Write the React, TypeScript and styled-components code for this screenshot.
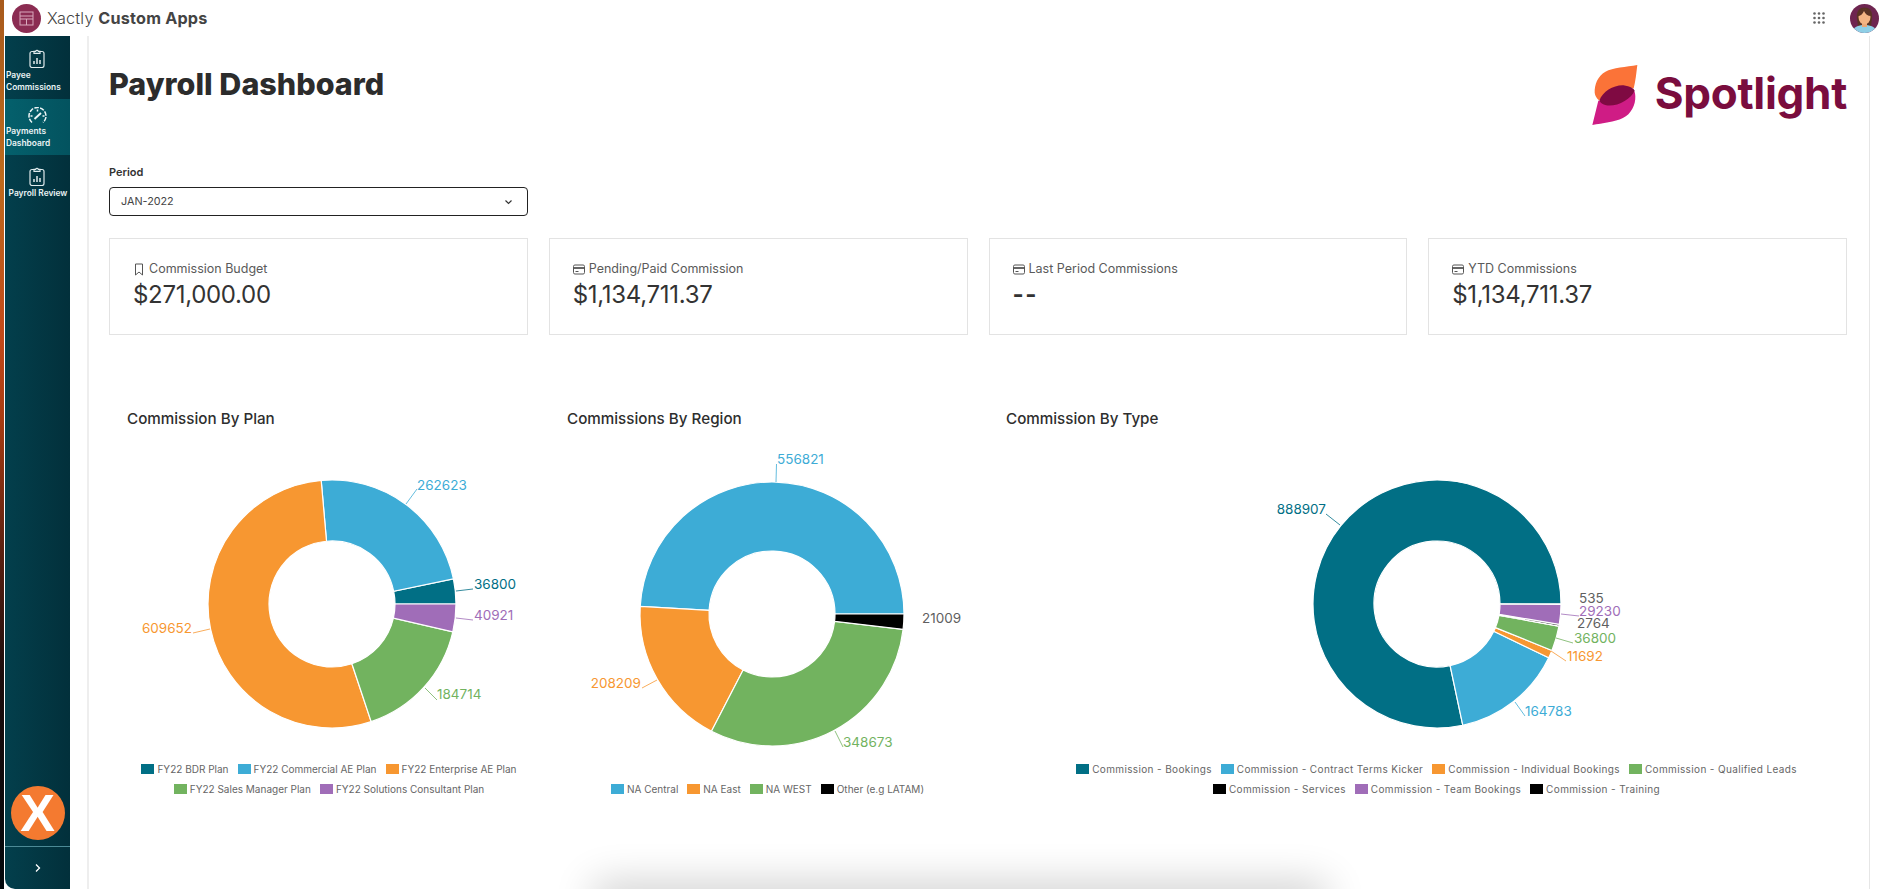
import * as React from 'react';
import styled, { createGlobalStyle } from 'styled-components';

type Slice = {
  value: number;
  color: string;
  label?: [number, number];
  end?: boolean;
  line?: [number, number, number, number];
};

type ChartData = {
  title: string;
  left: number;
  width: number;
  cx: number;
  cy: number;
  r: number;
  slices: Slice[];
  legend: { name: string; color: string }[];
  legendWidth: number;
  legendShift: number;
  legendSpacing: number;
};

const TEAL = '#016f85';
const BLUE = '#3dacd6';
const ORANGE = '#f79731';
const GREEN = '#72b35f';
const PURPLE = '#a06db8';
const BLACK = '#000000';

const charts: ChartData[] = [
  {
    title: 'Commission By Plan',
    left: 109,
    width: 440,
    cx: 332,
    cy: 604,
    r: 124,
    legendWidth: 400,
    legendShift: 0,
    legendSpacing: 0,
    slices: [
      { value: 36800, color: TEAL, label: [474, 589], line: [456, 591, 473, 589] },
      { value: 262623, color: BLUE, label: [417, 490], line: [406, 504, 417, 489] },
      { value: 609652, color: ORANGE, label: [192, 633], end: true, line: [210, 629, 193, 633] },
      { value: 184714, color: GREEN, label: [437, 699], line: [425, 688, 437, 700] },
      { value: 40921, color: PURPLE, label: [474, 620], line: [456, 618, 473, 620] },
    ],
    legend: [
      { name: 'FY22 BDR Plan', color: TEAL },
      { name: 'FY22 Commercial AE Plan', color: BLUE },
      { name: 'FY22 Enterprise AE Plan', color: ORANGE },
      { name: 'FY22 Sales Manager Plan', color: GREEN },
      { name: 'FY22 Solutions Consultant Plan', color: PURPLE },
    ],
  },
  {
    title: 'Commissions By Region',
    left: 549,
    width: 439,
    cx: 772,
    cy: 614,
    r: 132,
    legendWidth: 400,
    legendShift: -1,
    legendSpacing: 0,
    slices: [
      { value: 556821, color: BLUE, label: [777, 464], line: [776, 482, 776.5, 464] },
      { value: 208209, color: ORANGE, label: [641, 688], end: true, line: [657, 680, 642, 688] },
      { value: 348673, color: GREEN, label: [843, 747], line: [835, 731, 843, 747] },
      { value: 21009, color: BLACK, label: [922, 623] },
    ],
    legend: [
      { name: 'NA Central', color: BLUE },
      { name: 'NA East', color: ORANGE },
      { name: 'NA WEST', color: GREEN },
      { name: 'Other (e.g LATAM)', color: BLACK },
    ],
  },
  {
    title: 'Commission By Type',
    left: 988,
    width: 859,
    cx: 1437,
    cy: 604,
    r: 124,
    legendWidth: 800,
    legendShift: 19,
    legendSpacing: 0.36,
    slices: [
      { value: 888907, color: TEAL, label: [1326, 514], end: true, line: [1340, 525, 1326, 514] },
      { value: 164783, color: BLUE, label: [1525, 716], line: [1515, 702, 1525, 716] },
      { value: 11692, color: ORANGE, label: [1567, 661], line: [1551, 651, 1566, 661] },
      { value: 36800, color: GREEN, label: [1574, 643], line: [1556, 638, 1573, 643] },
      { value: 2764, color: BLACK, label: [1577, 628] },
      { value: 29230, color: PURPLE, label: [1579, 616], line: [1561, 614, 1579, 616] },
      { value: 535, color: BLACK, label: [1579, 603] },
    ],
    legend: [
      { name: 'Commission - Bookings', color: TEAL },
      { name: 'Commission - Contract Terms Kicker', color: BLUE },
      { name: 'Commission - Individual Bookings', color: ORANGE },
      { name: 'Commission - Qualified Leads', color: GREEN },
      { name: 'Commission - Services', color: BLACK },
      { name: 'Commission - Team Bookings', color: PURPLE },
      { name: 'Commission - Training', color: BLACK },
    ],
  },
];

const cards = [
  { title: 'Commission Budget', value: '$271,000.00', icon: 'bookmark' },
  { title: 'Pending/Paid Commission', value: '$1,134,711.37', icon: 'card' },
  { title: 'Last Period Commissions', value: '--', icon: 'card' },
  { title: 'YTD Commissions', value: '$1,134,711.37', icon: 'card' },
];

const arcPath = (cx: number, cy: number, r: number, r0: number, a0: number, a1: number) => {
  const pt = (rad: number, a: number) => `${cx + rad * Math.cos(a)} ${cy - rad * Math.sin(a)}`;
  const large = a1 - a0 > Math.PI ? 1 : 0;
  return `M${pt(r, a0)} A${r} ${r} 0 ${large} 0 ${pt(r, a1)} L${pt(r0, a1)} A${r0} ${r0} 0 ${large} 1 ${pt(r0, a0)} Z`;
};

//===============================
// @Styled
//===============================
const GlobalStyle = createGlobalStyle`
  html, body {
    margin: 0;
    padding: 0;
    background: #fff;
  }
  * {
    box-sizing: border-box;
  }
`;

const Shell = styled.div`
  position: relative;
  display: flex;
  width: 1883px;
  height: 889px;
  overflow: hidden;
  background: #fff;
  font-family: Inter, 'Open Sans', sans-serif;
  color: #333;
`;

const EdgeStrip = styled.div`
  flex: 0 0 5px;
  border-right: 1px solid #fff;
  background: linear-gradient(
    180deg,
    #a85a1c 0%,
    #bd6a1c 20%,
    #c2491a 38%,
    #a83c12 47%,
    #5c2010 62%,
    #1c0c0c 76%,
    #03080c 100%
  );
`;

const Column = styled.div`
  flex: 1;
  display: flex;
  flex-direction: column;
  min-width: 0;
`;

const TopBar = styled.header`
  flex: 0 0 36px;
  display: flex;
  align-items: center;
  padding: 0 4px 0 7px;
`;

const AppMark = styled.div`
  display: flex;
  align-items: center;
  justify-content: center;
  width: 29px;
  height: 29px;
  border-radius: 50%;
  background: #8b2c52;
`;

const AppName = styled.div`
  margin-left: 6px;
  font-size: 16.2px;
  font-weight: 300;
  letter-spacing: 0.2px;
  color: #444;
  b {
    font-weight: 700;
  }
`;

const TopRight = styled.div`
  margin-left: auto;
  display: flex;
  align-items: center;
  gap: 25px;
`;

const Body = styled.div`
  flex: 1;
  display: flex;
  min-height: 0;
`;

const Sidebar = styled.nav`
  flex: 0 0 65px;
  display: flex;
  flex-direction: column;
  border-bottom-left-radius: 10px;
  background: linear-gradient(90deg, #033f4c 0%, #02303b 100%);
`;

const NavItem = styled.div<{ $active?: boolean; $height: number; $pad: number; $center?: boolean }>`
  height: ${(p) => p.$height}px;
  display: flex;
  flex-direction: column;
  align-items: ${(p) => (p.$center ? 'center' : 'flex-start')};
  padding-top: ${(p) => p.$pad}px;
  background: ${(p) => (p.$active ? 'linear-gradient(90deg, #04606c 0%, #03535f 100%)' : 'transparent')};
  svg {
    align-self: center;
    margin-right: 1px;
    flex: none;
  }
`;

const NavLabel = styled.span`
  margin-top: 1px;
  padding-left: 1px;
  font-size: 8.4px;
  font-weight: 600;
  line-height: 12px;
  color: #eaf3f5;
  white-space: nowrap;
`;

const SideBottom = styled.div`
  margin-top: auto;
  display: flex;
  flex-direction: column;
  align-items: center;
`;

const XBadge = styled.div`
  width: 54px;
  height: 54px;
  margin-bottom: 6px;
  border-radius: 50%;
  background: #f47a30;
  display: flex;
  align-items: center;
  justify-content: center;
  font-family: 'Liberation Sans', Arial, sans-serif;
  font-size: 52px;
  font-weight: 700;
  color: #fff;
`;

const Expand = styled.div`
  width: 100%;
  height: 43px;
  border-top: 1px solid #4c8a96;
  display: flex;
  align-items: center;
  justify-content: center;
`;

const Main = styled.main`
  flex: 1;
  margin: 0 13px 0 17px;
  border-left: 2px solid #eeeeee;
  border-right: 1px solid #e6e6e6;
  padding: 26px 22px 0 20px;
  min-width: 0;
`;

const Header = styled.div`
  height: 103px;
  display: flex;
  justify-content: space-between;
  align-items: flex-start;
`;

const PageTitle = styled.h1`
  margin: 2px 0 0;
  font-size: 30.5px;
  line-height: 40px;
  font-weight: 800;
  color: #2c2c2c;
`;

const Brand = styled.div`
  display: flex;
  align-items: flex-start;
  gap: 17px;
`;

const BrandMark = styled.svg`
  margin-top: 2px;
`;

const BrandName = styled.span`
  font-size: 44px;
  line-height: 50px;
  margin-top: 6px;
  font-weight: 700;
  letter-spacing: -0.3px;
  color: #7a0d3e;
`;

const FieldLabel = styled.div`
  font-size: 11px;
  line-height: 14px;
  font-weight: 600;
  color: #333;
`;

const Select = styled.div`
  width: 419px;
  height: 29px;
  margin-top: 8px;
  padding: 0 14px 0 11px;
  border: 1px solid #222;
  border-radius: 4px;
  display: flex;
  align-items: center;
  justify-content: space-between;
  font-size: 10.8px;
  color: #444;
`;

const CardRow = styled.section`
  display: grid;
  grid-template-columns: repeat(4, 1fr);
  gap: 21px;
  margin-top: 22px;
`;

const Card = styled.div`
  height: 97px;
  padding: 22px 23px 0;
  border: 1px solid #e3e3e3;
`;

const CardLabel = styled.div`
  display: flex;
  align-items: center;
  gap: 4px;
  font-size: 12.5px;
  line-height: 16px;
  color: #5a5a5a;
`;

const CardValue = styled.div<{ $dash?: boolean }>`
  margin-top: 2px;
  font-size: 24px;
  line-height: 32px;
  font-weight: ${(p) => (p.$dash ? 700 : 400)};
  letter-spacing: ${(p) => (p.$dash ? '1.5px' : '-0.3px')};
  color: #333;
`;

const ChartGrid = styled.section`
  display: grid;
  grid-template-columns: 440px 439px 1fr;
  margin-top: 73px;
`;

const ChartPanel = styled.div`
  display: flex;
  flex-direction: column;
`;

const ChartTitle = styled.h3`
  margin: 0;
  padding-left: 18px;
  font-size: 15.2px;
  line-height: 22px;
  font-weight: 500;
  color: #2e2e2e;
`;

const ChartSvg = styled.svg`
  display: block;
  width: 100%;
  height: 329px;
`;

const Legend = styled.div<{ $width: number; $shift: number; $spacing: number }>`
  height: 40px;
  max-width: ${(p) => p.$width}px;
  margin: 0 auto;
  transform: translateX(${(p) => p.$shift}px);
  display: flex;
  flex-wrap: wrap;
  justify-content: center;
  align-content: flex-end;
  gap: 0 9px;
  letter-spacing: ${(p) => p.$spacing}px;
`;

const LegendItem = styled.div`
  display: flex;
  align-items: center;
  gap: 3px;
  height: 20px;
  font-size: 10px;
  color: #666;
  white-space: nowrap;
`;

const Swatch = styled.i<{ $color: string }>`
  width: 13px;
  height: 10px;
  background: ${(p) => p.$color};
`;

const ValueLabel = styled.text<{ $color: string }>`
  font-family: Inter, sans-serif;
  font-size: 13.5px;
  fill: ${(p) => p.$color};
`;

const BottomShadow = styled.div`
  position: absolute;
  left: 600px;
  bottom: -24px;
  width: 720px;
  height: 24px;
  box-shadow: 0 0 40px 6px rgba(0, 0, 0, 0.2);
`;

//===============================
// @Icons
//===============================
const ClipboardIcon = () => (
  <svg width="16" height="19" viewBox="0 0 16 19" fill="none" stroke="#dfeaec" strokeWidth="1.2">
    <rect x="1" y="2.5" width="14" height="16" rx="2" />
    <path d="M5 4.400V2.400h1.600a1.500 1.500 0 0 1 2.800 0H11v2z" fill="#03414e" />
    <path d="M5 15v-3M8 15V9M11 15v-4" strokeWidth="1.5" />
  </svg>
);

const GaugeIcon = () => (
  <svg width="19" height="17" viewBox="0 0 19 17" fill="none" stroke="#eef6f7" strokeWidth="1.5">
    <path d="M4 15.500A8.500 8.500 0 1 1 15 15.500" strokeDasharray="4.500 1.300" />
    <path d="M6.500 12 13 6" strokeWidth="1.900" />
    <path d="M2.500 9h2M16.500 9h-2M9.500 2.600v2" />
  </svg>
);

const BookmarkIcon = () => (
  <svg width="12" height="13" viewBox="0 0 12 13" fill="none" stroke="#555" strokeWidth="1">
    <path d="M2.500 1h7v11L6 9 2.500 12z" />
  </svg>
);

const CardIcon = () => (
  <svg width="12" height="13" viewBox="0 0 12 13" fill="none" stroke="#555" strokeWidth="1">
    <rect x=".5" y="2" width="11" height="9" rx="1.400" />
    <path d="M.5 5h11" strokeWidth="1.800" />
    <path d="M2.500 8.500h3" />
  </svg>
);

const Avatar = () => (
  <svg width="29" height="29" viewBox="0 0 29 29">
    <clipPath id="avatar-clip">
      <circle cx="14.500" cy="14.500" r="14.500" />
    </clipPath>
    <g clipPath="url(#avatar-clip)">
      <rect width="29" height="29" fill="#6e2550" />
      <path d="M7 15C6 6 10 3.500 14.500 3.500S23 6 22 15l-1 7H8z" fill="#5a3324" />
      <path d="M2 29c1-6 6-8 12.500-8S26 23 27 29z" fill="#8fcfe6" />
      <rect x="12" y="17" width="5" height="6" fill="#eaa878" />
      <ellipse cx="14.500" cy="13" rx="6" ry="7.500" fill="#f4b483" />
      <path d="M8 12c2 0 5-2 6-5 1 3 4 5 7 5-.5-4-2-7-6.500-7S8 8 8 12z" fill="#5a3324" />
    </g>
  </svg>
);

const SpotlightMark = () => (
  <BrandMark width="46" height="62" viewBox="278 190 137 183">
    <path d="M413 192C380 198 340 200 318 212C295 225 285 250 286 275C287 285 292 292 300 298C325 270 370 252 402 262C408 240 410 215 413 192Z" fill="#fb7338" />
    <path d="M279 371C310 365 345 362 370 350C395 338 408 310 407 285C407 275 404 268 400 262C375 300 330 310 297 298Z" fill="#cf1c85" />
    <path d="M300 298C310 270 345 250 375 253C390 255 400 260 405 268C395 295 350 318 320 312C310 310 303 305 300 298Z" fill="#7f0a42" />
  </BrandMark>
);

const Dots = () => (
  <svg width="12" height="12" viewBox="0 0 12 12" fill="#666">
    {[1.5, 6, 10.5].flatMap((y) =>
      [1.5, 6, 10.5].map((x) => <circle key={`${x}-${y}`} cx={x} cy={y} r="1.3" />),
    )}
  </svg>
);

//===============================
// @Components
//===============================
const Donut: React.FC<{ chart: ChartData }> = ({ chart }) => {
  const total = chart.slices.reduce((sum, s) => sum + s.value, 0);
  let angle = 0;
  return (
    <ChartSvg viewBox={`${chart.left} 430 ${chart.width} 329`}>
      {chart.slices.map((s) => {
        const a0 = angle;
        angle += (s.value / total) * Math.PI * 2;
        return (
          <path
            key={s.value}
            d={arcPath(chart.cx, chart.cy, chart.r, 63, a0, angle)}
            fill={s.color}
            stroke="#fff"
            strokeWidth="1.2"
          />
        );
      })}
      {chart.slices.map((s) => {
        const textColor = s.color === BLACK ? '#5f5f5f' : s.color;
        return (
          <g key={s.value}>
            {s.line && (
              <line x1={s.line[0]} y1={s.line[1]} x2={s.line[2]} y2={s.line[3]} stroke={textColor} strokeWidth="0.8" />
            )}
            {s.label && (
              <ValueLabel x={s.label[0]} y={s.label[1]} $color={textColor} textAnchor={s.end ? 'end' : 'start'}>
                {s.value}
              </ValueLabel>
            )}
          </g>
        );
      })}
    </ChartSvg>
  );
};

const App: React.FC = () => {
  return (
    <Shell>
      <GlobalStyle />
      <EdgeStrip />
      <Column>
        <TopBar>
          <AppMark>
            <svg width="15" height="15" viewBox="0 0 15 15" fill="none" stroke="#d9a8bc" strokeWidth="1">
              <rect x="1" y="1" width="13" height="13" />
              <path d="M1 5h13M1 8h13M7.500 8v6" />
            </svg>
          </AppMark>
          <AppName>
            Xactly <b>Custom Apps</b>
          </AppName>
          <TopRight>
            <Dots />
            <Avatar />
          </TopRight>
        </TopBar>
        <Body>
          <Sidebar>
            <NavItem $height={63} $pad={13}>
              <ClipboardIcon />
              <NavLabel>
                Payee
                <br />
                Commissions
              </NavLabel>
            </NavItem>
            <NavItem $active $height={56} $pad={8}>
              <GaugeIcon />
              <NavLabel>
                Payments
                <br />
                Dashboard
              </NavLabel>
            </NavItem>
            <NavItem $center $height={60} $pad={12}>
              <ClipboardIcon />
              <NavLabel>Payroll Review</NavLabel>
            </NavItem>
            <SideBottom>
              <XBadge>X</XBadge>
              <Expand>
                <svg width="8" height="10" viewBox="0 0 8 10" fill="none" stroke="#fff" strokeWidth="1.3">
                  <path d="M2 1.500 5.500 5 2 8.500" />
                </svg>
              </Expand>
            </SideBottom>
          </Sidebar>
          <Main>
            <Header>
              <PageTitle>Payroll Dashboard</PageTitle>
              <Brand>
                <SpotlightMark />
                <BrandName>Spotlight</BrandName>
              </Brand>
            </Header>
            <FieldLabel>Period</FieldLabel>
            <Select>
              JAN-2022
              <svg width="9" height="6" viewBox="0 0 9 6" fill="none" stroke="#333" strokeWidth="1.2">
                <path d="M1.500 1.500 4.500 4.500 7.500 1.500" />
              </svg>
            </Select>
            <CardRow>
              {cards.map((c) => (
                <Card key={c.title}>
                  <CardLabel>
                    {c.icon === 'bookmark' ? <BookmarkIcon /> : <CardIcon />}
                    {c.title}
                  </CardLabel>
                  <CardValue $dash={c.value === '--'}>{c.value}</CardValue>
                </Card>
              ))}
            </CardRow>
            <ChartGrid>
              {charts.map((chart) => (
                <ChartPanel key={chart.title}>
                  <ChartTitle>{chart.title}</ChartTitle>
                  <Donut chart={chart} />
                  <Legend $width={chart.legendWidth} $shift={chart.legendShift} $spacing={chart.legendSpacing}>
                    {chart.legend.map((l) => (
                      <LegendItem key={l.name}>
                        <Swatch $color={l.color} />
                        {l.name}
                      </LegendItem>
                    ))}
                  </Legend>
                </ChartPanel>
              ))}
            </ChartGrid>
          </Main>
        </Body>
      </Column>
      <BottomShadow />
    </Shell>
  );
};

export default App;
